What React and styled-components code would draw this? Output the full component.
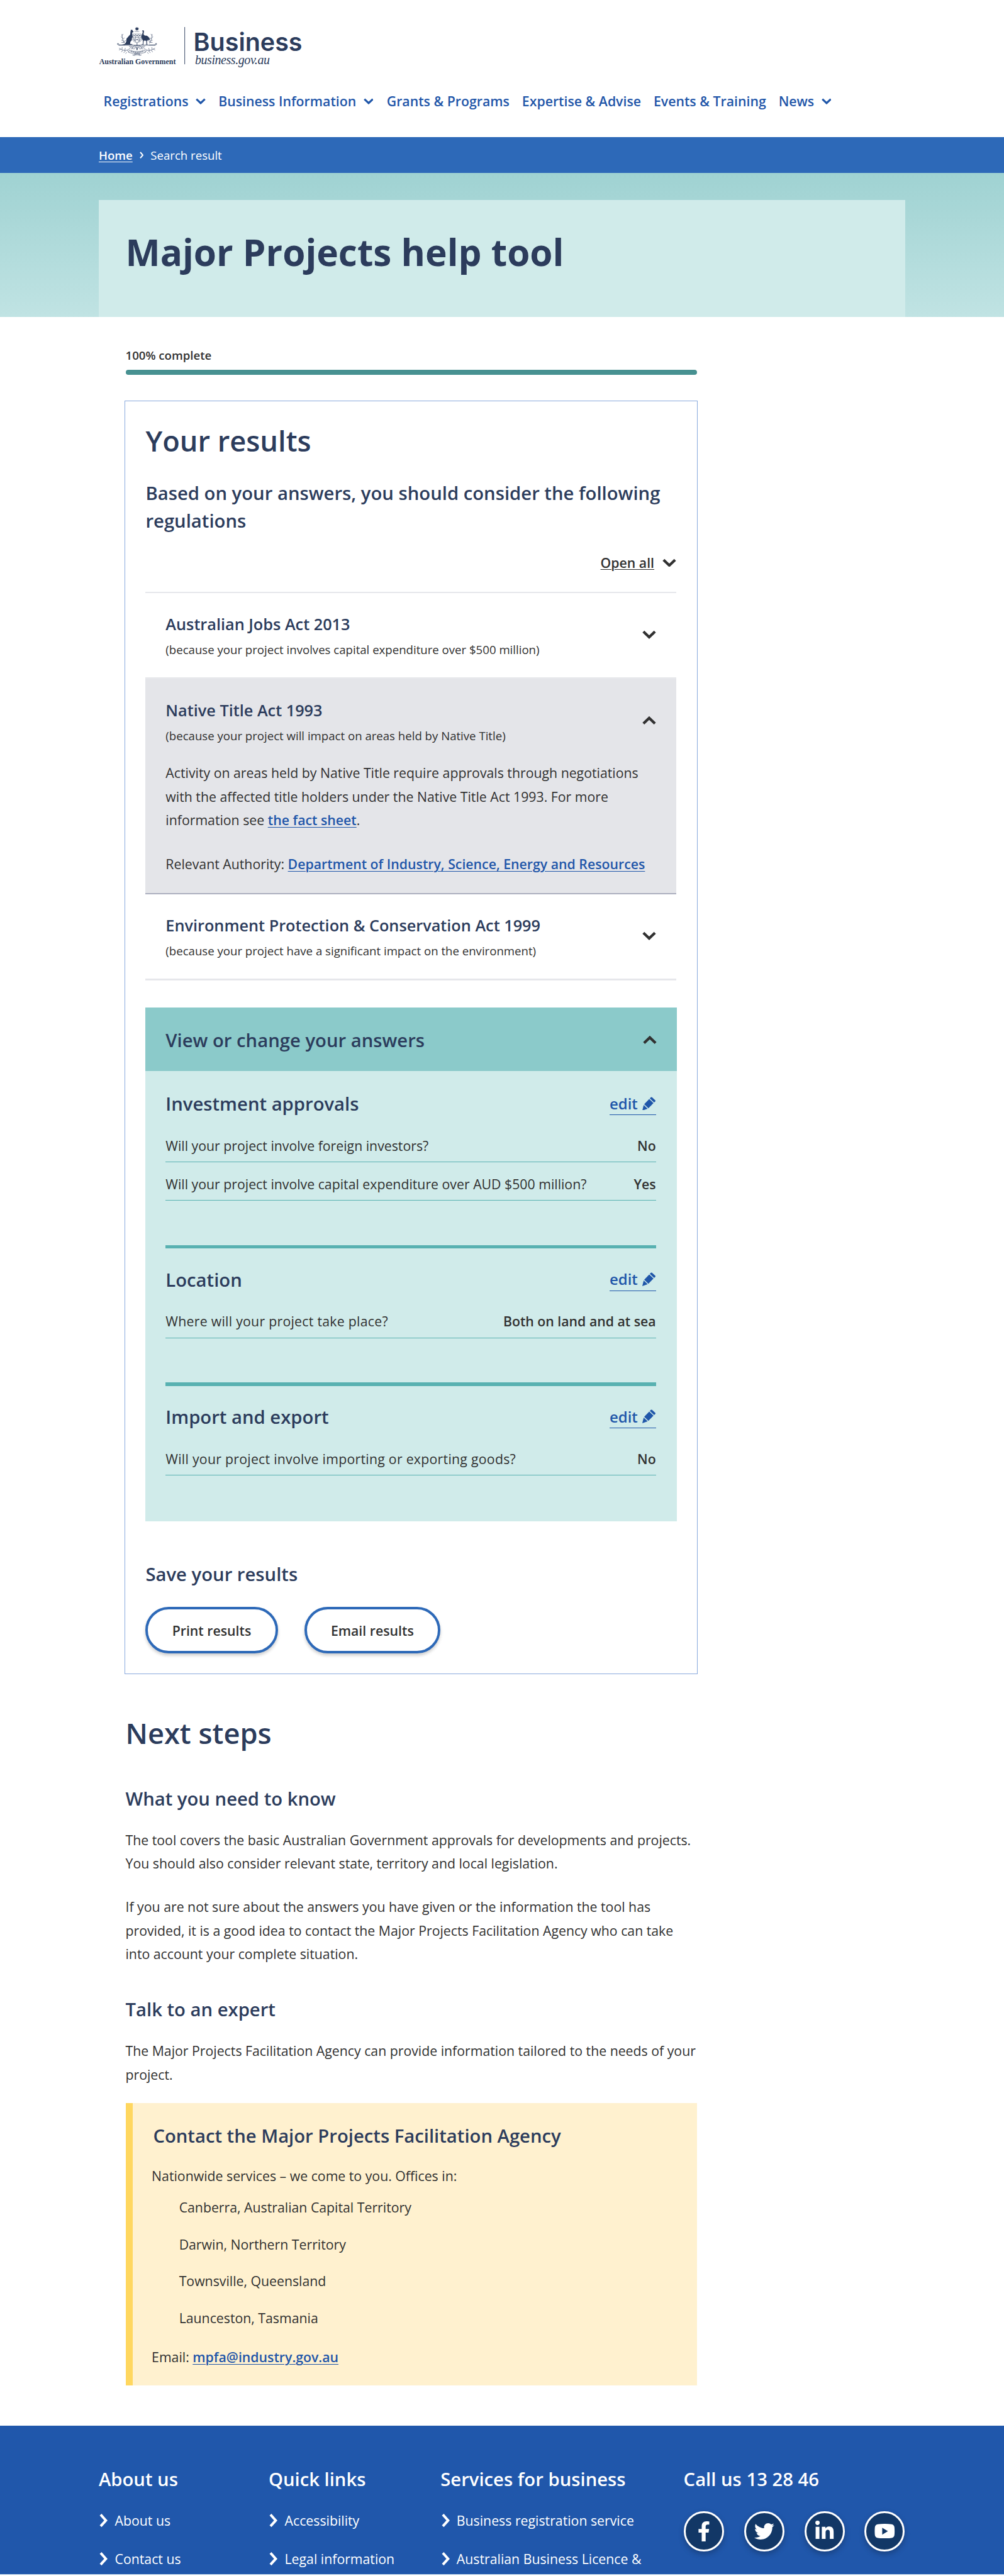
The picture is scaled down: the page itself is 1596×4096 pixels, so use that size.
import React from "react";
import styled, { createGlobalStyle, css } from "styled-components";
import { FaFacebookF, FaTwitter, FaLinkedinIn } from "react-icons/fa";

const navy = "#2c3c5c";
const ink = "#313131";
const link = "#1f56a9";
const blue = "#2d69b8";
const teal = "#58b1b1";
const mint = "#d0ebea";

/* lowers a text block's baseline without changing the space it takes */
const drop = css`
  padding-top: 0.014rem;
  margin-bottom: -0.014rem;
`;

/* 1rem = 100 design pixels */
const GlobalStyle = createGlobalStyle`
  html { font-size: 66.5px; }
  *, *::before, *::after { box-sizing: border-box; }
  body {
    margin: 0;
    background: #fff;
    color: ${ink};
    font-family: "Open Sans", "Noto Sans", sans-serif;
    font-size: 0.32rem;
    line-height: 0.56rem;
  }
  h1, h2, h3, h4, p, ul { margin: 0; padding: 0; }
  ul { list-style: none; }
`;

const Page = styled.div`
  width: 24rem;
  height: 4096px;
  overflow: hidden;
  background: #fff;
`;

/* ---------- header ---------- */
const Header = styled.header`
  height: 3.28rem;
  padding: 0.6rem 0 0 2.36rem;
`;
const Logo = styled.svg`
  display: block;
  width: 5rem;
  height: 1.05rem;
`;
const Nav = styled.nav`
  display: flex;
  margin: 0.53rem 0 0 0.115rem;
  line-height: 0.48rem;
`;
const NavLink = styled.a`
  display: inline-flex;
  align-items: center;
  gap: 0.17rem;
  margin-right: ${(p) => p.$gap}rem;
  color: ${link};
  font-weight: 600;
  white-space: nowrap;
`;
const Breadcrumb = styled.div`
  display: flex;
  align-items: center;
  height: 0.86rem;
  padding-left: 2.36rem;
  background: ${blue};
  color: #fff;
  font-size: 0.28rem;
`;
const HomeLink = styled.a`
  font-weight: 600;
  text-decoration: underline;
  text-decoration-thickness: 0.02rem;
  text-underline-offset: 0.04rem;
`;
const Crumb = styled.svg`
  width: 0.1rem;
  height: 0.17rem;
  margin: 0 0.16rem 0 0.17rem;
`;

/* ---------- hero ---------- */
const Hero = styled.section`
  height: 3.44rem;
  padding: 0.64rem 2.36rem 0;
  background: linear-gradient(#9fd2d2, #c0e3e3);
`;
const HeroBox = styled.div`
  height: 2.8rem;
  padding: 0.655rem 0.64rem 0;
  background: ${mint};
`;
const Title = styled.h1`
  color: ${navy};
  font-size: 0.88rem;
  line-height: 1.2rem;
  font-weight: 700;
`;

/* ---------- main ---------- */
const Main = styled.main`
  width: 13.66rem;
  margin-left: 3rem;
  padding-top: 0.72rem;
`;
const Progress = styled.div`
  font-size: 0.28rem;
  line-height: 0.4rem;
  font-weight: 600;
`;
const Bar = styled.div`
  height: 0.12rem;
  margin-top: 0.14rem;
  border-radius: 0.06rem;
  background: #479191;
`;
const Card = styled.section`
  margin: 0.62rem -0.02rem 0;
  height: 30.45rem;
  padding: 0.481rem 0.485rem 0;
  border: 1px solid #88a9dd;
`;
const H2 = styled.h2`
  margin-top: ${(p) => p.$top || 0}rem;
  color: ${navy};
  font-size: 0.68rem;
  line-height: 0.92rem;
  font-weight: 600;
`;
const H3 = styled.h3`
  margin-top: ${(p) => p.$top || 0}rem;
  ${drop}
  color: ${navy};
  font-size: 0.44rem;
  line-height: 0.66rem;
  font-weight: 600;
`;
const Text = styled.p`
  margin-top: ${(p) => p.$top || 0}rem;
  ${drop}
  white-space: nowrap;
`;
const Link = styled.a`
  color: ${link};
  font-weight: 600;
  text-decoration: underline;
  text-decoration-thickness: 0.02rem;
  text-underline-offset: 0.04rem;
`;
const OpenAll = styled.div`
  display: flex;
  justify-content: flex-end;
  align-items: center;
  gap: 0.19rem;
  margin: 0.434rem 0.02rem 0.455rem 0;
  line-height: 0.48rem;
  font-weight: 600;
`;
const OpenAllLabel = styled.span`
  text-decoration: underline;
  text-decoration-thickness: 0.02rem;
  text-underline-offset: 0.03rem;
`;

const Rule = styled.div`
  height: ${(p) => p.$h}rem;
  background: ${(p) => p.$color};
`;

/* accordion */
const Acts = styled.div`
  margin-right: 0.02rem;
`;
const Act = styled.article`
  padding: 0.43rem 0.48rem ${(p) => (p.$open ? 0.434 : 0.474)}rem;
  background: ${(p) => (p.$open ? "#e4e5e9" : "transparent")};
`;
const ActHead = styled.div`
  display: flex;
  justify-content: space-between;
  align-items: center;
`;
const ActTitle = styled.h4`
  ${drop}
  color: ${navy};
  font-size: 0.38rem;
  line-height: 0.6rem;
  font-weight: 600;
`;
const Reason = styled.p`
  padding-top: 0.12rem;
  margin-bottom: -0.01rem;
  font-size: 0.28rem;
  line-height: 0.4rem;
`;

/* answers */
const Answers = styled.section`
  margin-top: 0.645rem;
  height: 12.29rem;
  background: ${mint};
`;
const AnswersHead = styled.div`
  display: flex;
  justify-content: space-between;
  align-items: center;
  height: 1.52rem;
  padding: 0.04rem 0.48rem 0;
  background: #8bcaca;
`;
const Group = styled.div`
  margin: 0 0.5rem 1.06rem 0.48rem;
`;
const GroupHead = styled.div`
  display: flex;
  justify-content: space-between;
  align-items: flex-start;
  height: 0.66rem;
  margin: ${(p) => (p.$ruled ? 0.42 : 0.46)}rem 0 0.145rem;
`;
const Edit = styled.a`
  display: flex;
  gap: 0.115rem;
  margin-top: 0.12rem;
  padding-bottom: 0.06rem;
  border-bottom: 0.025rem solid ${link};
  color: ${link};
  font-size: 0.36rem;
  line-height: 0.4rem;
  font-weight: 600;
`;
const Answer = styled.div`
  display: flex;
  justify-content: space-between;
  padding: 0.28rem 0 0.145rem;
  border-bottom: 1px solid ${teal};
  line-height: 0.48rem;
`;
const Question = styled.span`
  letter-spacing: ${(p) => (p.$wide ? 0.004 : 0)}rem;
`;
const Strong = styled.strong`
  font-weight: 600;
`;
const Buttons = styled.div`
  display: flex;
  gap: 0.64rem;
  margin-top: 0.445rem;
`;
const Button = styled.button`
  width: ${(p) => p.$w}rem;
  height: 1.12rem;
  padding: 0;
  border: 4px solid ${blue};
  border-radius: 0.56rem;
  background: #fff;
  color: ${ink};
  font: 600 0.32rem "Open Sans", "Noto Sans", sans-serif;
  box-shadow: 0 0.05rem 0.08rem rgba(0, 0, 0, 0.2);
`;

/* contact */
const Contact = styled.aside`
  height: 6.756rem;
  margin-top: 0.414rem;
  padding: 0.46rem 0.46rem 0;
  border-left: 11px solid #ffd75f;
  background: #fff1cf;
`;
const ContactTitle = styled(H3)`
  margin-left: 0.035rem;
`;
const Offices = styled.ul`
  display: grid;
  gap: 0.32rem;
  margin: 0.21rem 0 0 0.655rem;
`;

/* ---------- footer ---------- */
const Footer = styled.footer`
  display: grid;
  grid-template-columns: 4.06rem 4.11rem 5.81rem 5.3rem;
  height: 3.563rem;
  margin-top: 0.964rem;
  padding: 0.962rem 0 0 2.36rem;
  overflow: hidden;
  background: #2057ab;
  border-bottom: 1px solid #b9d3e8;
  color: #fff;
`;
const FooterTitle = styled.h3`
  font-size: 0.44rem;
  line-height: 0.66rem;
  font-weight: 600;
  white-space: nowrap;
`;
const FooterLinks = styled.ul`
  display: grid;
  gap: 0.36rem;
  margin-top: 0.367rem;
`;
const FooterLink = styled.li`
  display: flex;
  align-items: center;
  gap: 0.165rem;
  padding-left: 0.02rem;
  white-space: nowrap;
`;
const Socials = styled.div`
  display: flex;
  gap: 0.48rem;
  margin: 0.422rem 0 0 0.01rem;
`;
const Social = styled.a`
  display: flex;
  align-items: center;
  justify-content: center;
  width: 0.96rem;
  height: 0.96rem;
  border: 3px solid #fff;
  border-radius: 50%;
  background: #123766;
  color: #fff;
  font-size: ${(p) => p.$size || 0.5}rem;
  box-shadow: 0 0.06rem 0.14rem rgba(0, 0, 0, 0.25);
`;
const YoutubeSvg = styled.svg`
  flex: none;
  width: 0.49rem;
  height: 0.35rem;
`;

const ChevronSvg = styled.svg`
  display: block;
  flex: none;
  width: ${(p) => p.$w}rem;
  height: ${(p) => p.$w * 0.625}rem;
  transform: ${(p) => (p.$up ? "rotate(180deg)" : "none")};
`;
const Chevron = ({ w = 0.33, up, color = ink }) => (
  <ChevronSvg $w={w} $up={up} viewBox="0 0 32 20">
    <path d="M2.6 3.2 L16 16 L29.4 3.2" fill="none" stroke={color} strokeWidth="6.2" />
  </ChevronSvg>
);

const Arrow = styled.svg`
  width: 0.2rem;
  height: 0.32rem;
`;

const PencilSvg = styled.svg`
  width: 0.32rem;
  height: 0.33rem;
  margin-top: 0.03rem;
`;
const EditLink = () => (
  <Edit>
    edit
    <PencilSvg viewBox="0 0 32 33" fill={link}>
      <path d="M20.5 1.2 Q22 0 23.4 1.2 L31 8.3 Q32.2 9.6 31 11 L28.4 13.6 L18 3.8 Z" />
      <path d="M16.6 5.4 L26.8 15 L14.6 27.4 L4.6 17.8 Z" />
      <path d="M3.4 19.4 L12.8 28.6 L0 33 Z" />
    </PencilSvg>
  </Edit>
);

const Sprig = () => (
  <g fill="none" stroke={navy} strokeWidth="2.6" strokeLinecap="round">
    <path d="M322 175 Q282 180 262 205 Q235 222 196 196" />
    <path d="M240 216 l-12 12 M222 210 l-10 12 M205 203 l-10 5 M215 204 l2 -14 M235 214 l4 -18 M252 210 l14 14 M250 226 l-8 7" />
    <path d="M234 160 Q214 130 215 96 M215 104 l9 -8 M218 122 l-8 -9 M220 130 l12 -8 M226 144 l-13 -6 M229 148 l13 -7 M232 154 l-18 0" />
    <path d="M268 182 q14 -4 24 10 q2 12 -10 8 M300 182 q-14 14 2 20 q12 -4 6 -14" />
    <path d="M236 172 L192 172 Q180 170 183 162 Q190 158 193 166" strokeWidth="3.6" />
  </g>
);

const Crest = () => (
  <g transform="translate(-16 -10) scale(.3316 .3333)">
    <path
      fill={navy}
      d="M324 42 l3 7 7 -3 -2 7 6 3 -6 3 2 7 -7 -2 -3 7 -4 -7 -7 2 2 -7 -6 -3 6 -3 -2 -7 7 3z"
    />
    <path d="M308 75 h33" stroke={navy} strokeWidth="4" strokeDasharray="5 3" />
    <path
      fill={navy}
      d="M281 59 L285 66 L290 62 L292 70 L299 76 L296 81 L289 83 L290 100 L293 117 L288 120 L286 138 L276 150 L274 164 L291 168 L291 171 L238 171 L214 170 L236 165 L246 150 L248 127 L264 109 L275 96 L277 76 Z"
    />
    <path
      fill={navy}
      d="M359 73 L366 66 Q375 66 374 77 Q370 89 372 98 Q376 106 390 105 Q408 109 417 133 L413 137 L401 136 L399 144 L396 141 L397 165 L405 169 L384 169 L392 164 L390 142 L372 141 L370 163 L373 169 L352 169 L366 164 L366 141 Q355 128 356 108 Q362 96 366 75 Z"
    />
    <g fill="none" stroke={navy} strokeWidth="2.4">
      <path d="M295 94 H354 V140 Q348 150 324 156 Q300 150 295 140 Z M314 94 V150 M334 94 V150 M295 117 H354" />
      <path d="M300 105 h8 M319 105 h10 M339 105 h10 M300 130 h9 M319 133 h10 M339 130 h9 M303 140 h7 M338 141 h7" strokeWidth="6" />
      <path d="M268 208 Q324 232 380 208 L384 226 Q324 244 264 226 Z" />
      <path d="M324 156 V208 M306 176 Q324 196 324 208 Q324 196 343 176 M324 228 V248 M312 228 L306 246 L292 244 M337 228 L342 246 L355 244 M318 236 L310 248 M330 236 L338 248" strokeWidth="3.6" />
      <path d="M278 218 Q324 233 370 218" strokeWidth="8" strokeDasharray="3 4" />
    </g>
    <Sprig />
    <g transform="matrix(-1 0 0 1 648 0)">
      <Sprig />
    </g>
    <path d="M192 174 H456" stroke={navy} strokeWidth="3.6" />
  </g>
);

const BrandLogo = () => (
  <Logo viewBox="0 0 500 105" fill={navy}>
    <Crest />
    <text x="1" y="93" textLength="183" lengthAdjust="spacingAndGlyphs" fontFamily="Liberation Serif, serif" fontWeight="700" fontSize="20">
      Australian Government
    </text>
    <rect x="204.8" y="4.5" width="1.4" height="89" />
    <text x="226.5" y="62" textLength="260" lengthAdjust="spacingAndGlyphs" fontFamily="Inter, sans-serif" fontWeight="600" fontSize="60.5">
      Business
    </text>
    <text x="230" y="92.6" textLength="179" lengthAdjust="spacing" fontFamily="Liberation Serif, serif" fontStyle="italic" fontSize="30">
      business.gov.au
    </text>
  </Logo>
);

const NAV = [
  ["Registrations", true, 0.305],
  ["Business Information", true, 0.32],
  ["Grants & Programs", false, 0.3],
  ["Expertise & Advise", false, 0.3],
  ["Events & Training", false, 0.3],
  ["News", true, 0],
];

const GROUPS = [
  {
    title: "Investment approvals",
    rows: [
      ["Will your project involve foreign investors?", "No"],
      ["Will your project involve capital expenditure over AUD $500 million?", "Yes"],
    ],
  },
  { title: "Location", wide: true, rows: [["Where will your project take place?", "Both on land and at sea"]] },
  {
    title: "Import and export",
    wide: true,
    rows: [["Will your project involve importing or exporting goods?", "No"]],
  },
];

const FOOTER = [
  ["About us", ["About us", "Contact us"]],
  ["Quick links", ["Accessibility", "Legal information"]],
  ["Services for business", ["Business registration service", "Australian Business Licence &"]],
];

const ActHeader = ({ title, reason, up }) => (
  <ActHead>
    <div>
      <ActTitle>{title}</ActTitle>
      <Reason>{reason}</Reason>
    </div>
    <Chevron up={up} />
  </ActHead>
);

export default function App() {
  return (
    <Page>
      <GlobalStyle />
      <Header>
        <BrandLogo />
        <Nav>
          {NAV.map(([label, menu, gap]) => (
            <NavLink key={label} $gap={gap}>
              {label}
              {menu && <Chevron w={0.24} color={link} />}
            </NavLink>
          ))}
        </Nav>
      </Header>
      <Breadcrumb>
        <HomeLink>Home</HomeLink>
        <Crumb viewBox="0 0 10 17">
          <path d="M1.5 1.5 L7.5 8.5 L1.5 15.5" fill="none" stroke="#fff" strokeWidth="3" />
        </Crumb>
        <span>Search result</span>
      </Breadcrumb>
      <Hero>
        <HeroBox>
          <Title>Major Projects help tool</Title>
        </HeroBox>
      </Hero>
      <Main>
        <Progress>100% complete</Progress>
        <Bar />
        <Card>
          <H2>Your results</H2>
          <H3 $top={0.464}>
            Based on your answers, you should consider the following
            <br />
            regulations
          </H3>
          <OpenAll>
            <OpenAllLabel>Open all</OpenAllLabel>
            <Chevron />
          </OpenAll>
          <Acts>
            <Rule $h={0.04} $color="#e6e7eb" />
            <Act>
              <ActHeader
                title="Australian Jobs Act 2013"
                reason="(because your project involves capital expenditure over $500 million)"
              />
            </Act>
            <Rule $h={0.04} $color="#e6e7eb" />
            <Act $open>
              <ActHeader
                title="Native Title Act 1993"
                reason="(because your project will impact on areas held by Native Title)"
                up
              />
              <Text $top={0.405}>
                Activity on areas held by Native Title require approvals through negotiations
                <br />
                with the affected title holders under the Native Title Act 1993. For more
                <br />
                information see <Link>the fact sheet</Link>.
              </Text>
              <Text $top={0.49}>
                Relevant Authority: <Link>Department of Industry, Science, Energy and Resources</Link>
              </Text>
            </Act>
            <Rule $h={0.04} $color="#acafbf" />
            <Act>
              <ActHeader
                title="Environment Protection & Conservation Act 1999"
                reason="(because your project have a significant impact on the environment)"
              />
            </Act>
            <Rule $h={0.04} $color="#e6e7eb" />
          </Acts>
          <Answers>
            <AnswersHead>
              <H3>View or change your answers</H3>
              <Chevron up />
            </AnswersHead>
            {GROUPS.map((g, i) => (
              <Group key={g.title}>
                {i > 0 && <Rule $h={0.08} $color={teal} />}
                <GroupHead $ruled={i > 0}>
                  <H3>{g.title}</H3>
                  <EditLink />
                </GroupHead>
                {g.rows.map(([q, a]) => (
                  <Answer key={q}>
                    <Question $wide={g.wide}>{q}</Question>
                    <Strong>{a}</Strong>
                  </Answer>
                ))}
              </Group>
            ))}
          </Answers>
          <H3 $top={0.935}>Save your results</H3>
          <Buttons>
            <Button $w={3.16}>Print results</Button>
            <Button $w={3.24}>Email results</Button>
          </Buttons>
        </Card>
        <H2 $top={0.946}>Next steps</H2>
        <H3 $top={0.78}>What you need to know</H3>
        <Text $top={0.367}>
          The tool covers the basic Australian Government approvals for developments and projects.
          <br />
          You should also consider relevant state, territory and local legislation.
        </Text>
        <Text $top={0.48}>
          If you are not sure about the answers you have given or the information the tool has
          <br />
          provided, it is a good idea to contact the Major Projects Facilitation Agency who can take
          <br />
          into account your complete situation.
        </Text>
        <H3 $top={0.73}>Talk to an expert</H3>
        <Text $top={0.374}>
          The Major Projects Facilitation Agency can provide information tailored to the needs of your
          <br />
          project.
        </Text>
        <Contact>
          <ContactTitle>Contact the Major Projects Facilitation Agency</ContactTitle>
          <Text $top={0.33}>Nationwide services – we come to you. Offices in:</Text>
          <Offices>
            <li>Canberra, Australian Capital Territory</li>
            <li>Darwin, Northern Territory</li>
            <li>Townsville, Queensland</li>
            <li>Launceston, Tasmania</li>
          </Offices>
          <Text $top={0.36}>
            Email: <Link>mpfa@industry.gov.au</Link>
          </Text>
        </Contact>
      </Main>
      <Footer>
        {FOOTER.map(([title, links]) => (
          <div key={title}>
            <FooterTitle>{title}</FooterTitle>
            <FooterLinks>
              {links.map((l) => (
                <FooterLink key={l}>
                  <Arrow viewBox="0 0 20 32">
                    <path d="M3 2 L15.5 16 L3 30" fill="none" stroke="#fff" strokeWidth="6" />
                  </Arrow>
                  {l}
                </FooterLink>
              ))}
            </FooterLinks>
          </div>
        ))}
        <div>
          <FooterTitle>Call us 13 28 46</FooterTitle>
          <Socials>
            <Social $size={0.48}>
              <FaFacebookF />
            </Social>
            <Social $size={0.48}>
              <FaTwitter />
            </Social>
            <Social $size={0.5}>
              <FaLinkedinIn />
            </Social>
            <Social>
              <YoutubeSvg viewBox="0 0 50 36">
                <path
                  fill="#fff"
                  fillRule="evenodd"
                  d="M8 1 Q25 -1 42 1 Q48 2 49 8 Q50 18 49 28 Q48 34 42 35 Q25 37 8 35 Q2 34 1 28 Q0 18 1 8 Q2 2 8 1 Z M19 9.5 V26.5 L33 18 Z"
                />
              </YoutubeSvg>
            </Social>
          </Socials>
        </div>
      </Footer>
    </Page>
  );
}
